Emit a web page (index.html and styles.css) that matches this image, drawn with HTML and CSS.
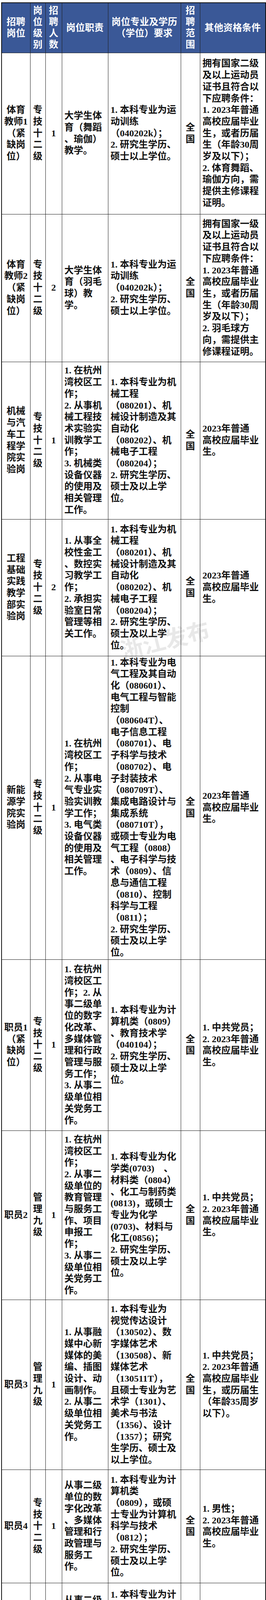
FILE: index.html
```html
<!DOCTYPE html>
<html lang="zh-CN">
<head>
<meta charset="utf-8">
<title>招聘岗位一览表</title>
<link rel="stylesheet" href="styles.css">
</head>
<body>
<div class="sheet">
<table class="jobs">
<colgroup>
<col class="w-post"><col class="w-level"><col class="w-num"><col class="w-duty"><col class="w-major"><col class="w-scope"><col class="w-other">
</colgroup>
<thead>
<tr>
<th>招聘<br>岗位</th>
<th>岗<br>位<br>级<br>别</th>
<th>招<br>聘<br>人<br>数</th>
<th>岗位职责</th>
<th>岗位专业及学历<br>（学位）要求</th>
<th>招<br>聘<br>范<br>围</th>
<th>其他资格条件</th>
</tr>
</thead>
<tbody>
<tr>
<td class="c">体育<br>教师1<br>（紧<br>缺岗<br>位）</td>
<td class="c">专<br>技<br>十<br>二<br>级</td>
<td class="c">1</td>
<td>大学生体<br>育（舞蹈<br>、瑜伽）<br>教学。</td>
<td>1. 本科专业为运<br>动训练<br>（040202k）；<br>2. 研究生学历、<br>硕士以上学位。</td>
<td class="c">全<br>国</td>
<td>拥有国家二级<br>及以上运动员<br>证书且符合以<br>下应聘条件：<br>1. 2023年普通<br>高校应届毕业<br>生，或者历届<br>生（年龄30周<br>岁及以下）；<br>2. 体育舞蹈、<br>瑜伽方向，需<br>提供主修课程<br>证明。</td>
</tr>
<tr>
<td class="c">体育<br>教师2<br>（紧<br>缺岗<br>位）</td>
<td class="c">专<br>技<br>十<br>二<br>级</td>
<td class="c">2</td>
<td>大学生体<br>育（羽毛<br>球）教<br>学。</td>
<td>1. 本科专业为运<br>动训练<br>（040202k）；<br>2. 研究生学历、<br>硕士以上学位。</td>
<td class="c">全<br>国</td>
<td>拥有国家一级<br>及以上运动员<br>证书且符合以<br>下应聘条件：<br>1. 2023年普通<br>高校应届毕业<br>生，或者历届<br>生（年龄30周<br>岁及以下）；<br>2. 羽毛球方<br>向，需提供主<br>修课程证明。</td>
</tr>
<tr>
<td class="c">机械<br>与汽<br>车工<br>程学<br>院实<br>验岗</td>
<td class="c">专<br>技<br>十<br>二<br>级</td>
<td class="c">1</td>
<td>1. 在杭州<br>湾校区工<br>作；<br>2. 从事机<br>械工程技<br>术实验实<br>训教学工<br>作；<br>3. 机械类<br>设备仪器<br>的使用及<br>相关管理<br>工作。</td>
<td>1. 本科专业为机<br>械工程<br>（080201）、机<br>械设计制造及其<br>自动化<br>（080202）、机<br>械电子工程<br>（080204）；<br>2. 研究生学历、<br>硕士及以上学<br>位。</td>
<td class="c">全<br>国</td>
<td>2023年普通<br>高校应届毕业<br>生。</td>
</tr>
<tr>
<td class="c">工程<br>基础<br>实践<br>教学<br>部实<br>验岗</td>
<td class="c">专<br>技<br>十<br>二<br>级</td>
<td class="c">2</td>
<td>1. 从事全<br>校性金工<br>、数控实<br>习教学工<br>作；<br>2. 承担实<br>验室日常<br>管理等相<br>关工作。</td>
<td>1. 本科专业为机<br>械工程<br>（080201）、机<br>械设计制造及其<br>自动化<br>（080202）、机<br>械电子工程<br>（080204）；<br>2. 研究生学历、<br>硕士及以上学<br>位。</td>
<td class="c">全<br>国</td>
<td>2023年普通<br>高校应届毕业<br>生。</td>
</tr>
<tr>
<td class="c">新能<br>源学<br>院实<br>验岗</td>
<td class="c">专<br>技<br>十<br>二<br>级</td>
<td class="c">1</td>
<td>1. 在杭州<br>湾校区工<br>作；<br>2. 从事电<br>气专业实<br>验实训教<br>学工作；<br>3. 电气类<br>设备仪器<br>的使用及<br>相关管理<br>工作。</td>
<td>1. 本科专业为电<br>气工程及其自动<br>化（080601）、<br>电气工程与智能<br>控制<br>（080604T）、<br>电子信息工程<br>（080701）、电<br>子科学与技术<br>（080702）、电<br>子封装技术<br>（080709T）、<br>集成电路设计与<br>集成系统<br>（080710T），<br>或硕士专业为电<br>气工程（0808）<br>、电子科学与技<br>术（0809）、信<br>息与通信工程<br>（0810）、控制<br>科学与工程<br>（0811）；<br>2. 研究生学历、<br>硕士及以上学<br>位。</td>
<td class="c">全<br>国</td>
<td>2023年普通<br>高校应届毕业<br>生。</td>
</tr>
<tr>
<td class="c">职员1<br>（紧<br>缺岗<br>位）</td>
<td class="c">专<br>技<br>十<br>二<br>级</td>
<td class="c">1</td>
<td>1. 在杭州<br>湾校区工<br>作；2. 从<br>事二级单<br>位的数字<br>化改革、<br>多媒体管<br>理和行政<br>管理与服<br>务工作；<br>3. 从事二<br>级单位相<br>关党务工<br>作。</td>
<td>1. 本科专业为计<br>算机类（0809）<br>、教育技术学<br>（040104）；<br>2. 研究生学历、<br>硕士及以上学<br>位。</td>
<td class="c">全<br>国</td>
<td>1. 中共党员；<br>2. 2023年普通<br>高校应届毕业<br>生。</td>
</tr>
<tr>
<td class="c">职员2</td>
<td class="c">管<br>理<br>九<br>级</td>
<td class="c">1</td>
<td>1. 在杭州<br>湾校区工<br>作；<br>2. 从事二<br>级单位的<br>教育管理<br>与服务工<br>作、项目<br>申报工<br>作；<br>3. 从事二<br>级单位相<br>关党务工<br>作。</td>
<td>1. 本科专业为化<br>学类(0703)　、<br>材料类（0804）<br>、化工与制药类<br>(0813)，或硕士<br>专业为化学<br>(0703)、材料与<br>化工(0856)；<br>2. 研究生学历、<br>硕士及以上学<br>位。</td>
<td class="c">全<br>国</td>
<td>1. 中共党员；<br>2. 2023年普通<br>高校应届毕业<br>生。</td>
</tr>
<tr>
<td class="c">职员3</td>
<td class="c">管<br>理<br>九<br>级</td>
<td class="c">1</td>
<td>1. 从事融<br>媒中心新<br>媒体的美<br>编、插图<br>设计、动<br>画制作。<br>2. 从事二<br>级单位相<br>关党务工<br>作。</td>
<td>1. 本科专业为<br>视觉传达设计<br>（130502）、数<br>字媒体艺术<br>（130508）、新<br>媒体艺术<br>（130511T），<br>且硕士专业为艺<br>术学（1301）、<br>美术与书法<br>（1356）、设计<br>（1357）；研究<br>生学历、硕士及<br>以上学位。</td>
<td class="c">全<br>国</td>
<td>1. 中共党员；<br>2. 2023年普通<br>高校应届毕业<br>生，或历届生<br>（年龄35周岁<br>以下）。</td>
</tr>
<tr>
<td class="c">职员4</td>
<td class="c">专<br>技<br>十<br>二<br>级</td>
<td class="c">1</td>
<td>从事二级<br>单位的数<br>字化改革<br>、多媒体<br>管理和行<br>政管理与<br>服务工<br>作。</td>
<td>1. 本科专业为计<br>算机类<br>（0809），或硕<br>士专业为计算机<br>科学与技术<br>（0812）；<br>2. 研究生学历、<br>硕士及以上学<br>位。</td>
<td class="c">全<br>国</td>
<td>1. 男性；<br>2. 2023年普通<br>高校应届毕业<br>生。</td>
</tr>
<tr>
<td class="c">职员5</td>
<td class="c">专<br>技<br>十<br>二<br>级</td>
<td class="c">1</td>
<td>从事二级<br>单位的数<br>字化改革<br>、多媒体<br>管理和行<br>政管理与<br>服务工<br>作。</td>
<td>1. 本科专业为计<br>算机类<br>（0809），或硕<br>士专业为计算机<br>科学与技术<br>（0812）；<br>2. 研究生学历、<br>硕士及以上学<br>位。</td>
<td class="c">全<br>国</td>
<td>1. 女性；<br>2. 2023年普通<br>高校应届毕业<br>生。</td>
</tr>
<tr>
<td class="c">网络<br>维护<br>岗</td>
<td class="c">专<br>技<br>十<br>二<br>级</td>
<td class="c">1</td>
<td>1. 主要负<br>责校园网<br>络规划运<br>维管理工<br>作；<br>2. 从事基<br>础网络服<br>务、虚拟<br>化平台管<br>理工作。</td>
<td>1. 本科专业为计<br>算机类<br>（0809），二级<br>学科不含新媒体<br>技术<br>（080912T）和<br>电影制作<br>（080913T）专<br>业，或硕士专业<br>为计算机科学与<br>技术（0812）、<br>软件工程<br>（0835）、网络<br>空间技术<br>（0839）、计算<br>机技术<br>（085404）、人<br>工智能<br>（085410）、大<br>数据技术与工程<br>（085411　）、<br>网络与信息安全<br>（085412）；<br>2. 研究生学历、<br>硕士以上学位。</td>
<td class="c">全<br>国</td>
<td>2023年普通高<br>校应届毕业<br>生，或者历届<br>生（年龄35周<br>岁以下）。</td>
</tr>
<tr>
<td class="c">系统<br>维护<br>岗</td>
<td class="c">专<br>技<br>十<br>二<br>级</td>
<td class="c">1</td>
<td>1. 负责学<br>校信息化<br>平台和应<br>用技术架<br>构设计、<br>系统维护<br>管理；2.<br>指导各二<br>级单位或<br>部门信息<br>系统调研<br>、建设及<br>运维管<br>理。</td>
<td>1. 本科专业为计<br>算机科学与技术<br>（080901）、软<br>件工程<br>（080902），或<br>硕士专业为计算<br>机科学与技术<br>（0812）、软件<br>工程（0835）、<br>计算机技术<br>（085404）、人<br>工智能<br>（085410）、大<br>数据技术与工程<br>（085411）；<br>2. 研究生学历、<br>硕士以上学位。</td>
<td class="c">全<br>国</td>
<td>2023年普通高<br>校应届毕业<br>生，或者历届<br>生（年龄35周<br>岁以下）。</td>
</tr>
<tr>
<td class="c">图书<br>阅读<br>推广<br>岗</td>
<td class="c">专<br>技<br>十<br>二<br>级</td>
<td class="c">1</td>
<td>从事阅读<br>推广与服<br>务、资源<br>管理等相<br>关工作。</td>
<td>1. 本科专业为图<br>书情报与档案管<br>理类（1205）、<br>中国语言文学类<br>（0501），且硕<br>士专业为信息资<br>源管理（1205）<br>、中国语言文学<br>（0501）；<br>2. 研究生学历、<br>硕士以上学位。</td>
<td class="c">全<br>国</td>
<td>2023年普通<br>高校应届毕业<br>生。</td>
</tr>
<tr>
<td class="c">图情<br>学科<br>服务<br>岗</td>
<td class="c">专<br>技<br>十<br>二<br>级</td>
<td class="c">1</td>
<td>从事学科<br>服务的设<br>计、组织<br>与实施等<br>相关工<br>作。</td>
<td>1. 本科专业为图<br>书情报与档案管<br>理类（1205）、<br>计算机类<br>（0809），或硕<br>士专业为信息资<br>源管理（1205）<br>、计算机科学与<br>技术（0812）；<br>2. 研究生学历、<br>硕士以上学位。</td>
<td class="c">全<br>国</td>
<td>2023年普通<br>高校应届毕业<br>生。</td>
</tr>
<tr>
<td class="c">国际<br>合作<br>管理<br>岗1</td>
<td class="c">管<br>理<br>九<br>级</td>
<td class="c">1</td>
<td>1. 负责外<br>专人员的<br>引进、组<br>织、管理<br>和服务工<br>作。2. 从<br>事二级单<br>位相关党<br>务工作。</td>
<td>1. 专业不限；<br>2. 研究生学历、<br>硕士及以上学<br>位。</td>
<td class="c">全<br>国</td>
<td>1. 男性；<br>2. 中共党员；<br>3. 年龄35周岁<br>及以下；<br>4. 有一年及以<br>上专职从事国<br>际合作、人才<br>管理等专职岗<br>位工作经历<br>（需提供佐证<br>材料）；<br>5. 须满足以下<br>条件之一：<br>雅思6.0分或<br>托福80分及以<br>上。</td>
</tr>
<tr>
<td class="c">国际<br>合作<br>管理<br>岗2</td>
<td class="c">管<br>理<br>九<br>级</td>
<td class="c">1</td>
<td>1. 负责外<br>专人员的<br>引进、组<br>织、管理<br>和服务工<br>作。2. 从<br>事二级单<br>位相关党<br>务工作。</td>
<td>1. 专业不限；<br>2. 研究生学历、<br>硕士及以上学<br>位。</td>
<td class="c">全<br>国</td>
<td>1. 女性；<br>2. 中共党员；<br>3. 年龄35周岁<br>及以下；<br>4. 有一年及以<br>上专职从事国<br>际合作、人才<br>管理等专职岗<br>位工作经历<br>（需提供佐证<br>材料）；<br>5. 须满足以下<br>条件之一：<br>雅思6.0分或<br>托福80分及以<br>上。</td>
</tr>
<tr>
<td class="c">会计<br>财务<br>管理<br>岗1</td>
<td class="c">专<br>技<br>十<br>二<br>级</td>
<td class="c">1</td>
<td>从事资金<br>收付、会<br>计制单、<br>财务管理<br>等会计审<br>计相关工<br>作。</td>
<td>1. 本科专业为会<br>计学<br>（120203K）、<br>财务管理<br>（120204）、审<br>计学<br>（120207）；<br>2. 研究生学历、<br>硕士及以上学<br>位。</td>
<td class="c">全<br>国</td>
<td>1. 男性；<br>2. 2023年普通<br>高校应届毕业<br>生。</td>
</tr>
<tr>
<td class="c">会计<br>财务<br>管理<br>岗2</td>
<td class="c">专<br>技<br>十<br>二<br>级</td>
<td class="c">1</td>
<td>从事资金<br>收付、会<br>计制单、<br>财务管理<br>等会计审<br>计相关工<br>作。</td>
<td>1. 本科专业为会<br>计学<br>（120203K）、<br>财务管理<br>（120204）、<br>审计学<br>（120207）；<br>2. 研究生学历、<br>硕士及以上学<br>位。</td>
<td class="c">全<br>国</td>
<td>1. 女性；<br>2. 2023年普通<br>高校应届毕业<br>生。</td>
</tr>
</tbody>
</table>
<div class="mark mark-1">浙江发布</div>
<div class="mark mark-2">浙江发布</div>
<div class="mark mark-3">浙江发布</div>
</div>
</body>
</html>
```
FILE: styles.css
```css
* { box-sizing: border-box; }
html, body { margin: 0; padding: 0; background: #fff; }
body {
  font-family: "Liberation Serif", "Noto Sans CJK SC", serif;
  color: #111;
}
.sheet {
  position: relative;
  width: 680px;
  padding: 6px 2px 0 3px;
}
.jobs {
  border-collapse: collapse;
  table-layout: fixed;
  width: 675px;
  border: 2px solid #111;
  font-size: 24px;
  line-height: 29.7px;
  font-weight: 700;
}
.w-post { width: 73px; }
.w-level { width: 39px; }
.w-num { width: 42px; }
.w-duty { width: 118px; }
.w-major { width: 186px; }
.w-scope { width: 49px; }
.w-other { width: 168px; }

.jobs th, .jobs td {
  border: 1px solid #1e1e1e;
  padding: 2px 6px;
  white-space: nowrap;
  vertical-align: middle;
  text-align: left;
}
.jobs th {
  background: #3a5897;
  color: #fff;
  font-weight: 700;
  text-align: center;
  line-height: 29px;
  padding: 2px 0;
}
.jobs td.c { text-align: center; padding: 2px 0; }

.jobs thead tr { height: 128px; }
.jobs tbody tr:nth-child(1) { height: 413px; }
.jobs tbody tr:nth-child(2) { height: 378px; }
.jobs tbody tr:nth-child(3) { height: 403px; }
.jobs tbody tr:nth-child(4) { height: 350px; }
.jobs tbody tr:nth-child(5) { height: 777px; }
.jobs tbody tr:nth-child(6) { height: 438px; }
.jobs tbody tr:nth-child(7) { height: 433px; }
.jobs tbody tr:nth-child(8) { height: 435px; }
.jobs tbody tr:nth-child(9) { height: 290px; }
.jobs tbody tr:nth-child(10) { height: 298px; }
.jobs tbody tr:nth-child(11) { height: 762px; }
.jobs tbody tr:nth-child(12) { height: 509px; }
.jobs tbody tr:nth-child(13) { height: 348px; }
.jobs tbody tr:nth-child(14) { height: 357px; }
.jobs tbody tr:nth-child(15) { height: 495px; }
.jobs tbody tr:nth-child(16) { height: 500px; }
.jobs tbody tr:nth-child(17) { height: 317px; }
.jobs tbody tr:nth-child(18) { height: 306px; }

.mark {
  position: absolute;
  left: 305px;
  font-family: "Noto Sans CJK SC", sans-serif;
  font-weight: 700;
  font-size: 58px;
  line-height: 58px;
  color: rgba(110, 110, 110, 0.16);
  transform: rotate(-14deg);
  pointer-events: none;
  white-space: nowrap;
}
.mark-1 { top: 1607px; }
.mark-2 { top: 4350px; }
.mark-3 { top: 6308px; }
```
